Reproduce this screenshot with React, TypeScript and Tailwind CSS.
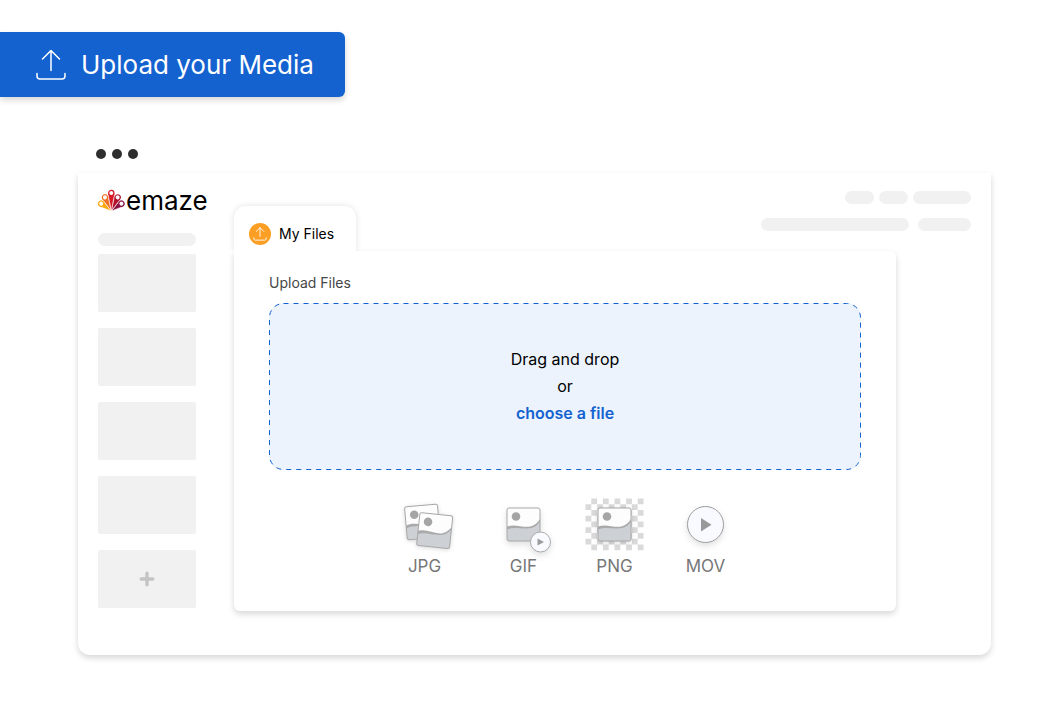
import React from 'react';
import { Plus } from 'lucide-react';

function UploadIcon({ className, strokeWidth = 1.5 }: { className: string; strokeWidth?: number }) {
  return (
    <svg viewBox="0 0 32 32" className={className} fill="none" stroke="currentColor" strokeWidth={strokeWidth} strokeLinecap="round" strokeLinejoin="round">
      <path d="M16 21.5V1.5M7.5 10 16 1.5 24.5 10" />
      <path d="M2 24.5V27a3 3 0 0 0 3 3h22a3 3 0 0 0 3-3v-2.500" />
    </svg>
  );
}

const petals = [
  { angle: -54, color: '#f9a90c', length: 12.5 },
  { angle: 54, color: '#8b1042', length: 12.5 },
  { angle: -25, color: '#ee7022', length: 15 },
  { angle: 25, color: '#b0122b', length: 15 },
  { angle: 0, color: '#d71925', length: 18 },
];

function Logo() {
  return (
    <div className="flex h-[22px] items-center whitespace-nowrap">
      <svg viewBox="0 0 28 22" className="h-[22px] w-7 shrink-0 overflow-visible">
        {petals.map(({ angle, color, length }) => (
          <g key={angle} transform={`rotate(${angle} 13.3 22)`}>
            <path d={`M13.300 22 9.900 ${22 - length}h6.800z`} fill={color} stroke="white" strokeWidth="0.5" />
            <circle cx="13.3" cy={22 - length} r="2.6" fill="white" stroke={color} strokeWidth="1.2" />
          </g>
        ))}
      </svg>
      <span className="pt-[2px] text-[26px] leading-none text-black">emaze</span>
    </div>
  );
}

function PictureShape() {
  return (
    <>
      <rect width="33" height="33" rx="2" fill="#fdfdfd" />
      <path d="M0 20C12 15 21 27 33 14V31a2 2 0 0 1-2 2H2a2 2 0 0 1-2-2z" fill="#cdd0d5" />
      <path d="M0 18.500C12 14 23 26 33 11V14C24 26 12 17 0 21.500z" fill="#aaa" />
      <circle cx="9" cy="8.5" r="4.300" fill="#a5a5a5" />
      <rect width="33" height="33" rx="2" fill="none" stroke="#a8a8a8" />
    </>
  );
}

function JpgIcon() {
  return (
    <svg viewBox="0 0 64 60" className="h-[60px] w-16 overflow-visible drop-shadow-sm">
      <g transform="translate(11.500 13) rotate(-5)"><PictureShape /></g>
      <g transform="translate(27 18.500) rotate(6)"><PictureShape /></g>
    </svg>
  );
}

function GifIcon() {
  return (
    <svg viewBox="0 0 64 60" className="h-[60px] w-16 overflow-visible drop-shadow-md">
      <g transform="translate(15 14)"><PictureShape /></g>
      <circle cx="48.5" cy="48" r="10" fill="#f9faff" stroke="#aaa" />
      <path d="M45.500 44.500v7l6.500-3.500z" fill="#9c9c9c" />
    </svg>
  );
}

function PngIcon() {
  const cells = [];
  for (let row = 0; row < 9; row++) {
    for (let col = 0; col < 10; col++) {
      if ((row + col) % 2 === 1) cells.push(<rect key={`${row}-${col}`} x={2.5 + col * 5.8} y={4.5 + row * 5.75} width="5.8" height="5.75" />);
    }
  }
  return (
    <svg viewBox="0 0 64 60" className="h-[60px] w-16 overflow-visible">
      <g fill="#dadada">{cells}</g>
      <g transform="translate(15 14)" className="drop-shadow-sm"><PictureShape /></g>
    </svg>
  );
}

function MovIcon() {
  return (
    <svg viewBox="0 0 64 60" className="h-[60px] w-16 overflow-visible drop-shadow-md">
      <circle cx="31.5" cy="30.5" r="18" fill="#f9faff" stroke="#9c9c9c" />
      <path d="M27 24v13.500L37.500 30.700z" fill="#999" />
    </svg>
  );
}

const formats = [
  { label: 'JPG', icon: <JpgIcon />, className: 'mr-2' },
  { label: 'GIF', icon: <GifIcon />, className: '' },
  { label: 'PNG', icon: <PngIcon />, className: '' },
  { label: 'MOV', icon: <MovIcon />, className: '' },
];

function Sidebar() {
  return (
    <aside className="flex w-[108px] shrink-0 flex-col items-start">
      <Logo />
      <div className="mt-[22px] h-[13px] w-[98px] rounded-full bg-[#f1f1f1]" />
      <div className="mt-2 flex flex-col gap-4">
        {[0, 1, 2, 3].map((n) => (
          <div key={n} className="h-[58px] w-[98px] rounded-xs bg-[#f1f1f1]" />
        ))}
        <button aria-label="Add slide" className="flex h-[58px] w-[98px] items-center justify-center rounded-xs bg-[#f1f1f1] text-[#c4c4c4]">
          <Plus size={20} strokeWidth={4} />
        </button>
      </div>
    </aside>
  );
}

function DropZone() {
  return (
    <div className="relative mt-[9px] flex h-[167px] flex-col items-center justify-center rounded-[14px] bg-[#ecf3fd] text-base leading-[27px] text-black">
      <svg className="absolute inset-0 h-full w-full overflow-visible" fill="none">
        <rect x="0.5" y="0.5" className="h-[calc(100%-1px)] w-[calc(100%-1px)]" rx="14" stroke="#1462d0" strokeWidth="1" strokeDasharray="5 5" />
      </svg>
      <p>Drag and drop</p>
      <p>or</p>
      <button className="relative font-semibold text-[#1462d0]">choose a file</button>
    </div>
  );
}

export default function App() {
  return (
    <div className="min-h-screen bg-white pt-8 pb-12 font-['Inter',sans-serif]">
      <button className="flex h-[65px] items-center rounded-r-md bg-[#1462d0] pr-[31px] pl-[35px] text-white shadow-[0_3px_6px_rgba(0,0,0,0.16)]">
        <UploadIcon className="h-8 w-8" />
        <span className="ml-[14px] text-[26px] leading-8">Upload your Media</span>
      </button>

      <div className="mr-[52px] ml-[78px]">
        <div className="mt-[52px] ml-[18px] flex gap-[6px]">
          <span className="size-[10px] rounded-full bg-[#2f2f2f]" />
          <span className="size-[10px] rounded-full bg-[#2f2f2f]" />
          <span className="size-[10px] rounded-full bg-[#2f2f2f]" />
        </div>

        <div className="mt-[14px] flex gap-7 rounded-b-xl bg-white px-5 pt-4 pb-11 shadow-[0_3px_6px_rgba(0,0,0,0.16)]">
          <Sidebar />

          <main className="min-w-0 flex-1 pt-[2px]">
            <div className="flex h-[60px] items-start justify-between">
              <button className="relative z-10 flex h-[45px] items-center self-end rounded-t-xl bg-white pt-[10px] pr-[22px] pl-[15px] text-sm text-black shadow-[0_0_6px_rgba(0,0,0,0.12)] [clip-path:inset(-10px_-10px_0_-10px)]">
                <span className="mr-2 flex size-[22px] items-center justify-center rounded-full bg-[#fb9f24] text-white">
                  <UploadIcon className="size-[14px]" strokeWidth={2} />
                </span>
                My Files
              </button>
              <div className="flex flex-col items-end gap-[14px]">
                <div className="flex gap-[5px]">
                  <div className="h-[13px] w-[29px] rounded-full bg-[#f1f1f1]" />
                  <div className="h-[13px] w-[29px] rounded-full bg-[#f1f1f1]" />
                  <div className="h-[13px] w-[58px] rounded-full bg-[#f1f1f1]" />
                </div>
                <div className="flex gap-[9px]">
                  <div className="h-[13px] w-[148px] rounded-full bg-[#f1f1f1]" />
                  <div className="h-[13px] w-[53px] rounded-full bg-[#f1f1f1]" />
                </div>
              </div>
            </div>

            <section className="mr-[75px] rounded-b-md rounded-tr-md bg-white px-[35px] pt-[21px] pb-[33px] shadow-[0_3px_6px_rgba(0,0,0,0.16)]">
              <h2 className="text-sm leading-[22px] text-[#474747]">Upload Files</h2>
              <DropZone />
              <ul className="mt-6 flex justify-center gap-[27px]">
                {formats.map(({ label, icon, className }) => (
                  <li key={label} className={className}>
                    {icon}
                    <p className="text-center text-[17px] leading-6 text-[#777]">{label}</p>
                  </li>
                ))}
              </ul>
            </section>
          </main>
        </div>
      </div>
    </div>
  );
}
